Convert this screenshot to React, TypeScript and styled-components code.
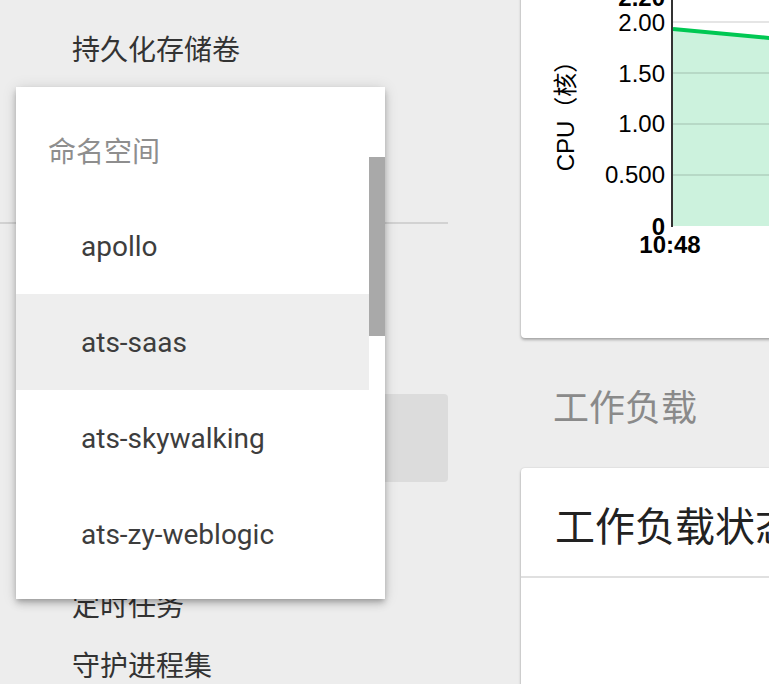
import React from "react";
import styled, { createGlobalStyle } from "styled-components";

const Global = createGlobalStyle`
  html, body { margin: 0; padding: 0; background: #ededed; }
  body { width: 769px; height: 684px; overflow: hidden; font-family: Roboto, "Noto Sans CJK SC", sans-serif; }
  #root { width: 769px; height: 684px; overflow: hidden; }
`;

const Page = styled.div`
  display: flex;
  align-items: flex-start;
  width: 769px;
  height: 684px;
  overflow: hidden;
  background: #ededed;
`;

const Sidebar = styled.nav`
  position: relative;
  flex: 0 0 448px;
  align-self: stretch;
  display: flex;
  flex-direction: column;
  padding-top: 18px;
  & > * { flex-shrink: 0; }
`;

const NavItem = styled.div<{ $gap?: number }>`
  height: 60px;
  display: flex;
  align-items: center;
  padding-left: 72px;
  margin-top: ${(p) => p.$gap ?? 0}px;
  font-family: "Noto Sans CJK SC", sans-serif;
  font-size: 28px;
  color: #333;
  white-space: nowrap;
`;

const Divider = styled.div<{ $gap: number }>`
  height: 2px;
  background: #d2d2d2;
  margin-top: ${(p) => p.$gap}px;
`;

const NamespaceField = styled.div<{ $gap: number }>`
  height: 88px;
  margin: ${(p) => p.$gap}px 0 0 16px;
  background: #dcdcdc;
  border-radius: 4px;
`;

const Menu = styled.div`
  position: absolute;
  left: 16px;
  top: 87px;
  width: 369px;
  height: 512px;
  display: flex;
  background: #fff;
  box-shadow: 0 3px 5px -1px rgba(0, 0, 0, 0.2), 0 5px 8px 0 rgba(0, 0, 0, 0.14),
    0 1px 14px 0 rgba(0, 0, 0, 0.12);
  overflow: hidden;
`;

const MenuList = styled.ul`
  flex: 1;
  margin: 0;
  padding: 15px 0 0;
  list-style: none;
  overflow: hidden;
`;

const MenuHeader = styled.li`
  height: 96px;
  display: flex;
  align-items: center;
  padding-left: 32px;
  font-family: "Noto Sans CJK SC", sans-serif;
  font-size: 28px;
  color: #8e8e8e;
`;

const MenuOption = styled.li<{ $active?: boolean }>`
  height: 96px;
  display: flex;
  align-items: center;
  padding-left: 65px;
  font-family: Roboto, sans-serif;
  font-size: 28px;
  color: #3d3d3d;
  background: ${(p) => (p.$active ? "#eeeeee" : "transparent")};
`;

const ScrollTrack = styled.div`
  flex: 0 0 16px;
  display: flex;
  flex-direction: column;
`;

const ScrollThumb = styled.div`
  margin-top: 70px;
  height: 179px;
  background: #a9a9a9;
`;

const Main = styled.main`
  flex: 0 0 auto;
  width: 700px;
  padding-left: 73px;
  margin-top: -62px;
  display: flex;
  flex-direction: column;
  & > * { flex-shrink: 0; }
`;

const Card = styled.section<{ $height: number }>`
  height: ${(p) => p.$height}px;
  background: #fff;
  border-radius: 4px;
  box-shadow: 0 2px 3px rgba(0, 0, 0, 0.28), 0 0 2px rgba(0, 0, 0, 0.14);
  overflow: hidden;
`;

const SectionTitle = styled.h2`
  margin: 43px 0 39px 32px;
  line-height: 48px;
  font-family: "Noto Sans CJK SC", sans-serif;
  font-size: 36px;
  font-weight: 400;
  color: #8a8a8a;
`;

const CardHeader = styled.header`
  height: 110px;
  box-sizing: border-box;
  padding: 28px 0 0 34px;
  border-bottom: 2px solid #e0e0e0;
  font-family: "Noto Sans CJK SC", sans-serif;
  font-size: 40px;
  line-height: 56px;
  color: #222;
  white-space: nowrap;
`;

const ChartSvg = styled.svg`
  display: block;
  font-family: Arial, "Liberation Sans", "Noto Sans CJK SC", sans-serif;
`;

const OX = 521;
const OY = -62;
const px = (x: number) => x - OX;
const py = (y: number) => y - OY;

function CpuChart() {
  const y0 = 226;
  const lineY = (x: number) => 29 + (x - 673) * 0.093;
  const xEnd = 800;
  const fill = `M${px(673)},${py(lineY(673))} L${px(xEnd)},${py(lineY(xEnd))} L${px(xEnd)},${py(y0)} L${px(673)},${py(y0)} Z`;
  const labels: [string, number][] = [
    ["2.00", 31],
    ["1.50", 81.5],
    ["1.00", 132],
    ["0.500", 183],
  ];
  return (
    <ChartSvg width={640} height={400}>
      <path d={fill} fill="#ccf2dd" />
      {[22, 73, 124, 175].map((g) => (
        <line key={g} x1={px(673)} x2={px(xEnd)} y1={py(g)} y2={py(g)} stroke="rgba(0,0,0,0.1)" strokeWidth={2} />
      ))}
      <line
        x1={px(673)}
        y1={py(lineY(673))}
        x2={px(xEnd)}
        y2={py(lineY(xEnd))}
        stroke="#00c853"
        strokeWidth={4}
      />
      <line x1={px(672)} x2={px(672)} y1={py(-20)} y2={py(227)} stroke="#333" strokeWidth={2} />
      <text x={px(665)} y={py(5.5)} textAnchor="end" fontSize={24} fontWeight={700} fill="#000">
        2.20
      </text>
      {labels.map(([t, b]) => (
        <text key={t} x={px(665)} y={py(b)} textAnchor="end" fontSize={24} fill="#000">
          {t}
        </text>
      ))}
      <text x={px(665)} y={py(235)} textAnchor="end" fontSize={24} fontWeight={700} fill="#000">
        0
      </text>
      <text x={px(670)} y={py(253)} textAnchor="middle" fontSize={24} fontWeight={700} fill="#000">
        10:48
      </text>
      <text
        x={0}
        y={0}
        transform={`translate(${px(574)}, ${py(110)}) rotate(-90)`}
        textAnchor="middle"
        fontSize={24}
        fill="#000"
      >
        CPU（核）
      </text>
    </ChartSvg>
  );
}

export default function App() {
  return (
    <>
      <Global />
      <Page>
        <Sidebar>
          <NavItem>持久化存储卷</NavItem>
          <NavItem>存储类</NavItem>
          <Divider $gap={84} />
          <NamespaceField $gap={170} />
          <NavItem $gap={32}>部署</NavItem>
          <NavItem>定时任务</NavItem>
          <NavItem>守护进程集</NavItem>
          <Menu>
            <MenuList>
              <MenuHeader>命名空间</MenuHeader>
              <MenuOption>apollo</MenuOption>
              <MenuOption $active>ats-saas</MenuOption>
              <MenuOption>ats-skywalking</MenuOption>
              <MenuOption>ats-zy-weblogic</MenuOption>
              <MenuOption>default</MenuOption>
            </MenuList>
            <ScrollTrack>
              <ScrollThumb />
            </ScrollTrack>
          </Menu>
        </Sidebar>
        <Main>
          <Card $height={400}>
            <CpuChart />
          </Card>
          <SectionTitle>工作负载</SectionTitle>
          <Card $height={320}>
            <CardHeader>工作负载状态</CardHeader>
          </Card>
        </Main>
      </Page>
    </>
  );
}
